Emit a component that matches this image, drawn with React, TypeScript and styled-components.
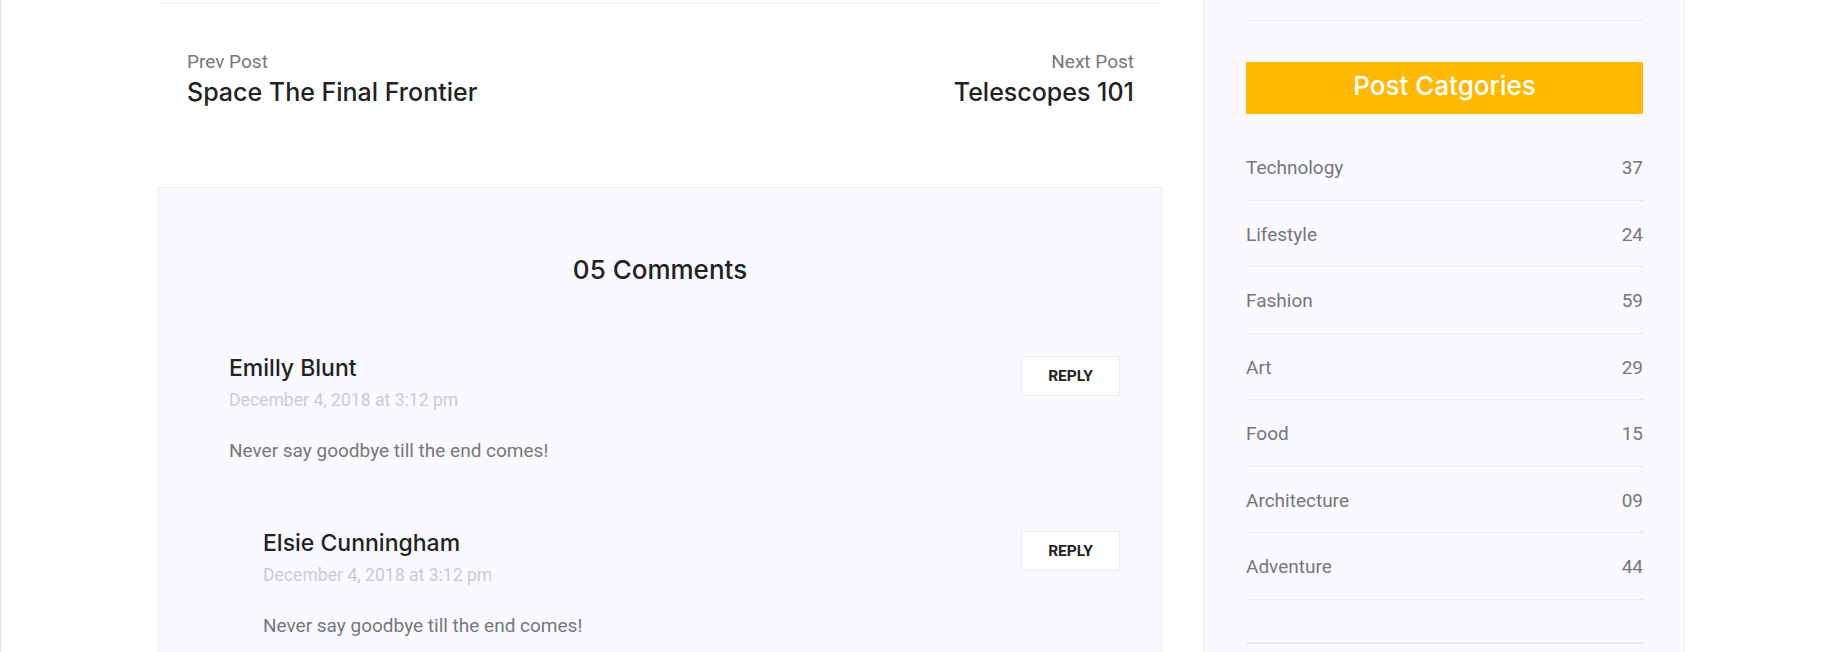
import React from "react";
import styled, { createGlobalStyle } from "styled-components";

const GlobalStyle = createGlobalStyle`
  html, body { margin: 0; padding: 0; background: #ffffff; }
  body { font-family: Roboto, "Liberation Sans", sans-serif; }
  * { box-sizing: border-box; }
`;

const headingFont = `Inter, "Open Sans", sans-serif`;

const Page = styled.div`
  height: 652px;
  overflow: hidden;
  border-left: 1px solid #e2e2e2;
  display: flex;
  align-items: flex-start;
  gap: 41px;
  padding-left: 157px;
`;

const Main = styled.div`
  width: 1004px;
  flex: none;
`;

const PostNav = styled.nav`
  margin-top: 3px;
  border-top: 1px solid #eeeeee;
  display: flex;
  justify-content: space-between;
  padding: 46px 28px 79px 29px;
`;

const NavItem = styled.a<{ $align: "left" | "right" }>`
  display: flex;
  flex-direction: column;
  gap: 2px;
  text-align: ${(p) => p.$align};
  text-decoration: none;
`;

const NavLabel = styled.span`
  font-family: Roboto, sans-serif;
  font-size: 19px;
  line-height: 24px;
  color: #777777;
`;

const NavTitle = styled.span`
  font-family: ${headingFont};
  font-weight: 500;
  font-size: 25px;
  line-height: 32px;
  color: #222222;
`;

const CommentsBox = styled.section`
  background: #f9f9ff;
  border: 1px solid #ececf2;
  padding-top: 66px;
  min-height: 600px;
`;

const CommentsTitle = styled.h4`
  margin: 0;
  text-align: center;
  font-family: ${headingFont};
  font-weight: 500;
  font-size: 26px;
  line-height: 32px;
  color: #222222;
`;

const CommentList = styled.div`
  margin-top: 67px;
  padding: 0 41px 0 70px;
  display: flex;
  flex-direction: column;
  gap: 65.5px;
`;

const CommentRow = styled.div<{ $depth: number }>`
  display: flex;
  justify-content: space-between;
  align-items: flex-start;
  margin-left: ${(p) => p.$depth * 34}px;
`;

const CommentBody = styled.div`
  display: flex;
  flex-direction: column;
`;

const AuthorName = styled.h5`
  margin: 0;
  font-family: ${headingFont};
  font-weight: 500;
  font-size: 23px;
  line-height: 30px;
  color: #222222;
`;

const CommentDate = styled.span`
  margin-top: 6px;
  font-family: Roboto, sans-serif;
  font-size: 17.6px;
  line-height: 22px;
  color: #cccccc;
`;

const CommentText = styled.p`
  margin: 27.5px 0 0;
  font-family: Roboto, sans-serif;
  font-size: 19px;
  line-height: 24px;
  color: #777777;
`;

const ReplyButton = styled.button`
  margin-top: 3px;
  width: 99px;
  height: 40px;
  background: #ffffff;
  border: 1px solid #eeeeee;
  font-family: Roboto, sans-serif;
  font-weight: 700;
  font-size: 15.5px;
  color: #222222;
  text-transform: uppercase;
  cursor: pointer;
  padding: 0;
`;

const Sidebar = styled.aside`
  align-self: stretch;
  width: 482px;
  flex: none;
  background: #f9f9ff;
  border-left: 1px solid #ececf2;
  border-right: 1px solid #ececf2;
  padding: 0 41px 0 42px;
`;

const PrevWidget = styled.div`
  height: 21px;
  border-bottom: 1px solid #eaeaef;
`;

const Widget = styled.div`
  margin-top: 41px;
  padding-bottom: 42px;
  border-bottom: 2px solid #ebebf0;
`;

const WidgetHeader = styled.h4`
  margin: 0;
  height: 52px;
  padding-bottom: 4px;
  background: #ffb900;
  color: #ffffff;
  text-align: center;
  font-family: ${headingFont};
  font-weight: 500;
  font-size: 26px;
  line-height: 48px;
`;

const CatList = styled.ul`
  list-style: none;
  margin: 20px 0 0;
  padding: 0;
`;

const CatItem = styled.li`
  display: flex;
  justify-content: space-between;
  padding: 22px 0 19px;
  line-height: 24.5px;
  font-family: Roboto, sans-serif;
  font-size: 19px;
  color: #777777;
  border-bottom: 1px dotted #dcdce2;
`;

const comments = [
  { name: "Emilly Blunt", date: "December 4, 2018 at 3:12 pm", text: "Never say goodbye till the end comes!", depth: 0 },
  { name: "Elsie Cunningham", date: "December 4, 2018 at 3:12 pm", text: "Never say goodbye till the end comes!", depth: 1 },
];

const categories: [string, string][] = [
  ["Technology", "37"],
  ["Lifestyle", "24"],
  ["Fashion", "59"],
  ["Art", "29"],
  ["Food", "15"],
  ["Architecture", "09"],
  ["Adventure", "44"],
];

export default function App() {
  return (
    <>
      <GlobalStyle />
      <Page>
        <Main>
          <PostNav>
            <NavItem $align="left">
              <NavLabel>Prev Post</NavLabel>
              <NavTitle>Space The Final Frontier</NavTitle>
            </NavItem>
            <NavItem $align="right">
              <NavLabel>Next Post</NavLabel>
              <NavTitle>Telescopes 101</NavTitle>
            </NavItem>
          </PostNav>
          <CommentsBox>
            <CommentsTitle>05 Comments</CommentsTitle>
            <CommentList>
              {comments.map((c) => (
                <CommentRow key={c.name} $depth={c.depth}>
                  <CommentBody>
                    <AuthorName>{c.name}</AuthorName>
                    <CommentDate>{c.date}</CommentDate>
                    <CommentText>{c.text}</CommentText>
                  </CommentBody>
                  <ReplyButton>Reply</ReplyButton>
                </CommentRow>
              ))}
            </CommentList>
          </CommentsBox>
        </Main>
        <Sidebar>
          <PrevWidget />
          <Widget>
            <WidgetHeader>Post Catgories</WidgetHeader>
            <CatList>
              {categories.map(([name, count]) => (
                <CatItem key={name}>
                  <span>{name}</span>
                  <span>{count}</span>
                </CatItem>
              ))}
            </CatList>
          </Widget>
        </Sidebar>
      </Page>
    </>
  );
}
